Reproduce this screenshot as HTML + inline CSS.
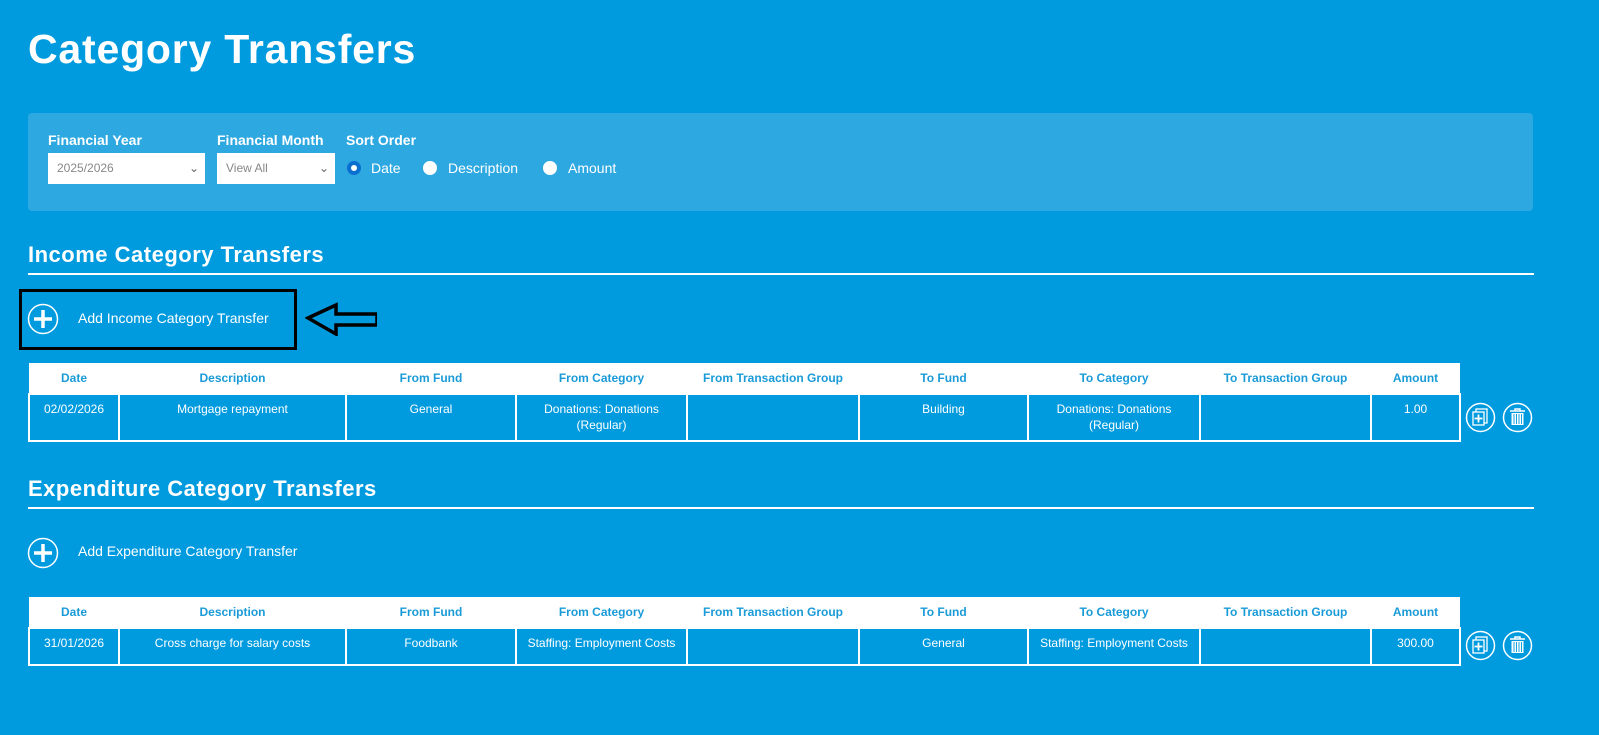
<!DOCTYPE html>
<html><head><style>
body{margin:0;width:1599px;height:735px;background:#009bdf;font-family:"Liberation Sans",sans-serif;color:#fff;position:relative;overflow:hidden}
.abs{position:absolute}
h1{position:absolute;left:28px;top:26px;margin:0;font-size:41px;font-weight:bold;letter-spacing:0.8px}
.panel{left:28px;top:113px;width:1505px;height:98px;background:#2ea8e1;border-radius:4px}
.lbl{font-size:14px;font-weight:bold;top:132px}
.sel{top:153px;height:31px;background:#fff;color:#888;font-size:12px;line-height:31px;padding-left:9px;box-sizing:border-box}
.sel span{position:absolute;right:6px;top:0;color:#666}
.radio{top:161px;width:14px;height:14px;border-radius:50%;background:#fff;box-sizing:border-box}
.rt{top:160px;font-size:14px}
h2{position:absolute;left:28px;margin:0;font-size:22px;font-weight:bold;letter-spacing:0.5px}
.line{left:28px;width:1506px;height:2px;background:#fff}
.add{font-size:14px}
table{position:absolute;left:28px;border-collapse:collapse;font-size:12px;table-layout:fixed}
th{background:#fff;color:#1a9bd8;font-weight:bold;height:30px;padding:0}
td{border:2px solid #fff;vertical-align:top;text-align:center;padding:6px 4px 0;line-height:16px}
.ic{width:29px;height:29px;border:1.5px solid #fff;border-radius:50%;box-sizing:border-box}
</style></head><body>
<h1>Category Transfers</h1>
<div class="abs panel"></div>
<div class="abs lbl" style="left:48px">Financial Year</div>
<div class="abs lbl" style="left:217px">Financial Month</div>
<div class="abs lbl" style="left:346px">Sort Order</div>
<div class="abs sel" style="left:48px;width:157px">2025/2026<span>&#8964;</span></div>
<div class="abs sel" style="left:217px;width:118px">View All<span>&#8964;</span></div>
<div class="abs radio" style="left:347px;border:4px solid #0a6fd0"></div>
<div class="abs rt" style="left:371px">Date</div>
<div class="abs radio" style="left:423px"></div>
<div class="abs rt" style="left:448px">Description</div>
<div class="abs radio" style="left:543px"></div>
<div class="abs rt" style="left:568px">Amount</div>

<h2 style="top:242px">Income Category Transfers</h2>
<div class="abs line" style="top:273px"></div>
<div class="abs" style="left:19px;top:289px;width:272px;height:55px;border:3px solid #000"></div>
<svg class="abs" style="left:27px;top:303px" width="32" height="32"><circle cx="16" cy="16" r="14.5" fill="none" stroke="#fff" stroke-width="1.5"/><path d="M16 7v18M7 16h18" stroke="#fff" stroke-width="3.5"/></svg>
<div class="abs add" style="left:78px;top:310px">Add Income Category Transfer</div>
<svg class="abs" style="left:305px;top:302px" width="72" height="34"><path d="M3 16L31 3v9h41v11H31v9z" fill="none" stroke="#000" stroke-width="3.5" stroke-linejoin="miter"/></svg>

<table style="top:363px;width:1431px">
<colgroup><col width="90"><col width="227"><col width="170"><col width="171"><col width="172"><col width="169"><col width="172"><col width="171"><col width="89"></colgroup>
<tr><th>Date</th><th>Description</th><th>From Fund</th><th>From Category</th><th>From Transaction Group</th><th>To Fund</th><th>To Category</th><th>To Transaction Group</th><th>Amount</th></tr>
<tr style="height:47px"><td>02/02/2026</td><td>Mortgage repayment</td><td>General</td><td>Donations: Donations (Regular)</td><td></td><td>Building</td><td>Donations: Donations (Regular)</td><td></td><td>1.00</td></tr>
</table>
<svg class="abs" style="left:1465px;top:402px" width="70" height="32"><circle cx="15.5" cy="15.5" r="14" fill="none" stroke="#fff" stroke-width="1.5"/><rect x="11" y="7" width="11" height="14" fill="none" stroke="#fff" stroke-width="1.3"/><rect x="8" y="10" width="11" height="13" fill="#009bdf" stroke="#fff" stroke-width="1.3"/><path d="M13.5 12.5v8M9.5 16.5h8" stroke="#fff" stroke-width="1.8"/><circle cx="52.5" cy="15.5" r="14" fill="none" stroke="#fff" stroke-width="1.5"/><path d="M45 9h15M50 9V7h5v2" stroke="#fff" stroke-width="1.5" fill="none"/><path d="M46.5 11h12v12h-12z" fill="#fff"/><path d="M49 12v10M51.5 12v10M54 12v10M56.5 12v10" stroke="#009bdf" stroke-width="0.9"/></svg>

<h2 style="top:476px">Expenditure Category Transfers</h2>
<div class="abs line" style="top:507px"></div>
<svg class="abs" style="left:27px;top:537px" width="32" height="32"><circle cx="16" cy="16" r="14.5" fill="none" stroke="#fff" stroke-width="1.5"/><path d="M16 7v18M7 16h18" stroke="#fff" stroke-width="3.5"/></svg>
<div class="abs add" style="left:78px;top:543px">Add Expenditure Category Transfer</div>

<table style="top:597px;width:1431px">
<colgroup><col width="90"><col width="227"><col width="170"><col width="171"><col width="172"><col width="169"><col width="172"><col width="171"><col width="89"></colgroup>
<tr><th>Date</th><th>Description</th><th>From Fund</th><th>From Category</th><th>From Transaction Group</th><th>To Fund</th><th>To Category</th><th>To Transaction Group</th><th>Amount</th></tr>
<tr style="height:37px"><td>31/01/2026</td><td>Cross charge for salary costs</td><td>Foodbank</td><td>Staffing: Employment Costs</td><td></td><td>General</td><td>Staffing: Employment Costs</td><td></td><td>300.00</td></tr>
</table>
<svg class="abs" style="left:1465px;top:630px" width="70" height="32"><circle cx="15.5" cy="15.5" r="14" fill="none" stroke="#fff" stroke-width="1.5"/><rect x="11" y="7" width="11" height="14" fill="none" stroke="#fff" stroke-width="1.3"/><rect x="8" y="10" width="11" height="13" fill="#009bdf" stroke="#fff" stroke-width="1.3"/><path d="M13.5 12.5v8M9.5 16.5h8" stroke="#fff" stroke-width="1.8"/><circle cx="52.5" cy="15.5" r="14" fill="none" stroke="#fff" stroke-width="1.5"/><path d="M45 9h15M50 9V7h5v2" stroke="#fff" stroke-width="1.5" fill="none"/><path d="M46.5 11h12v12h-12z" fill="#fff"/><path d="M49 12v10M51.5 12v10M54 12v10M56.5 12v10" stroke="#009bdf" stroke-width="0.9"/></svg>
</body></html>
